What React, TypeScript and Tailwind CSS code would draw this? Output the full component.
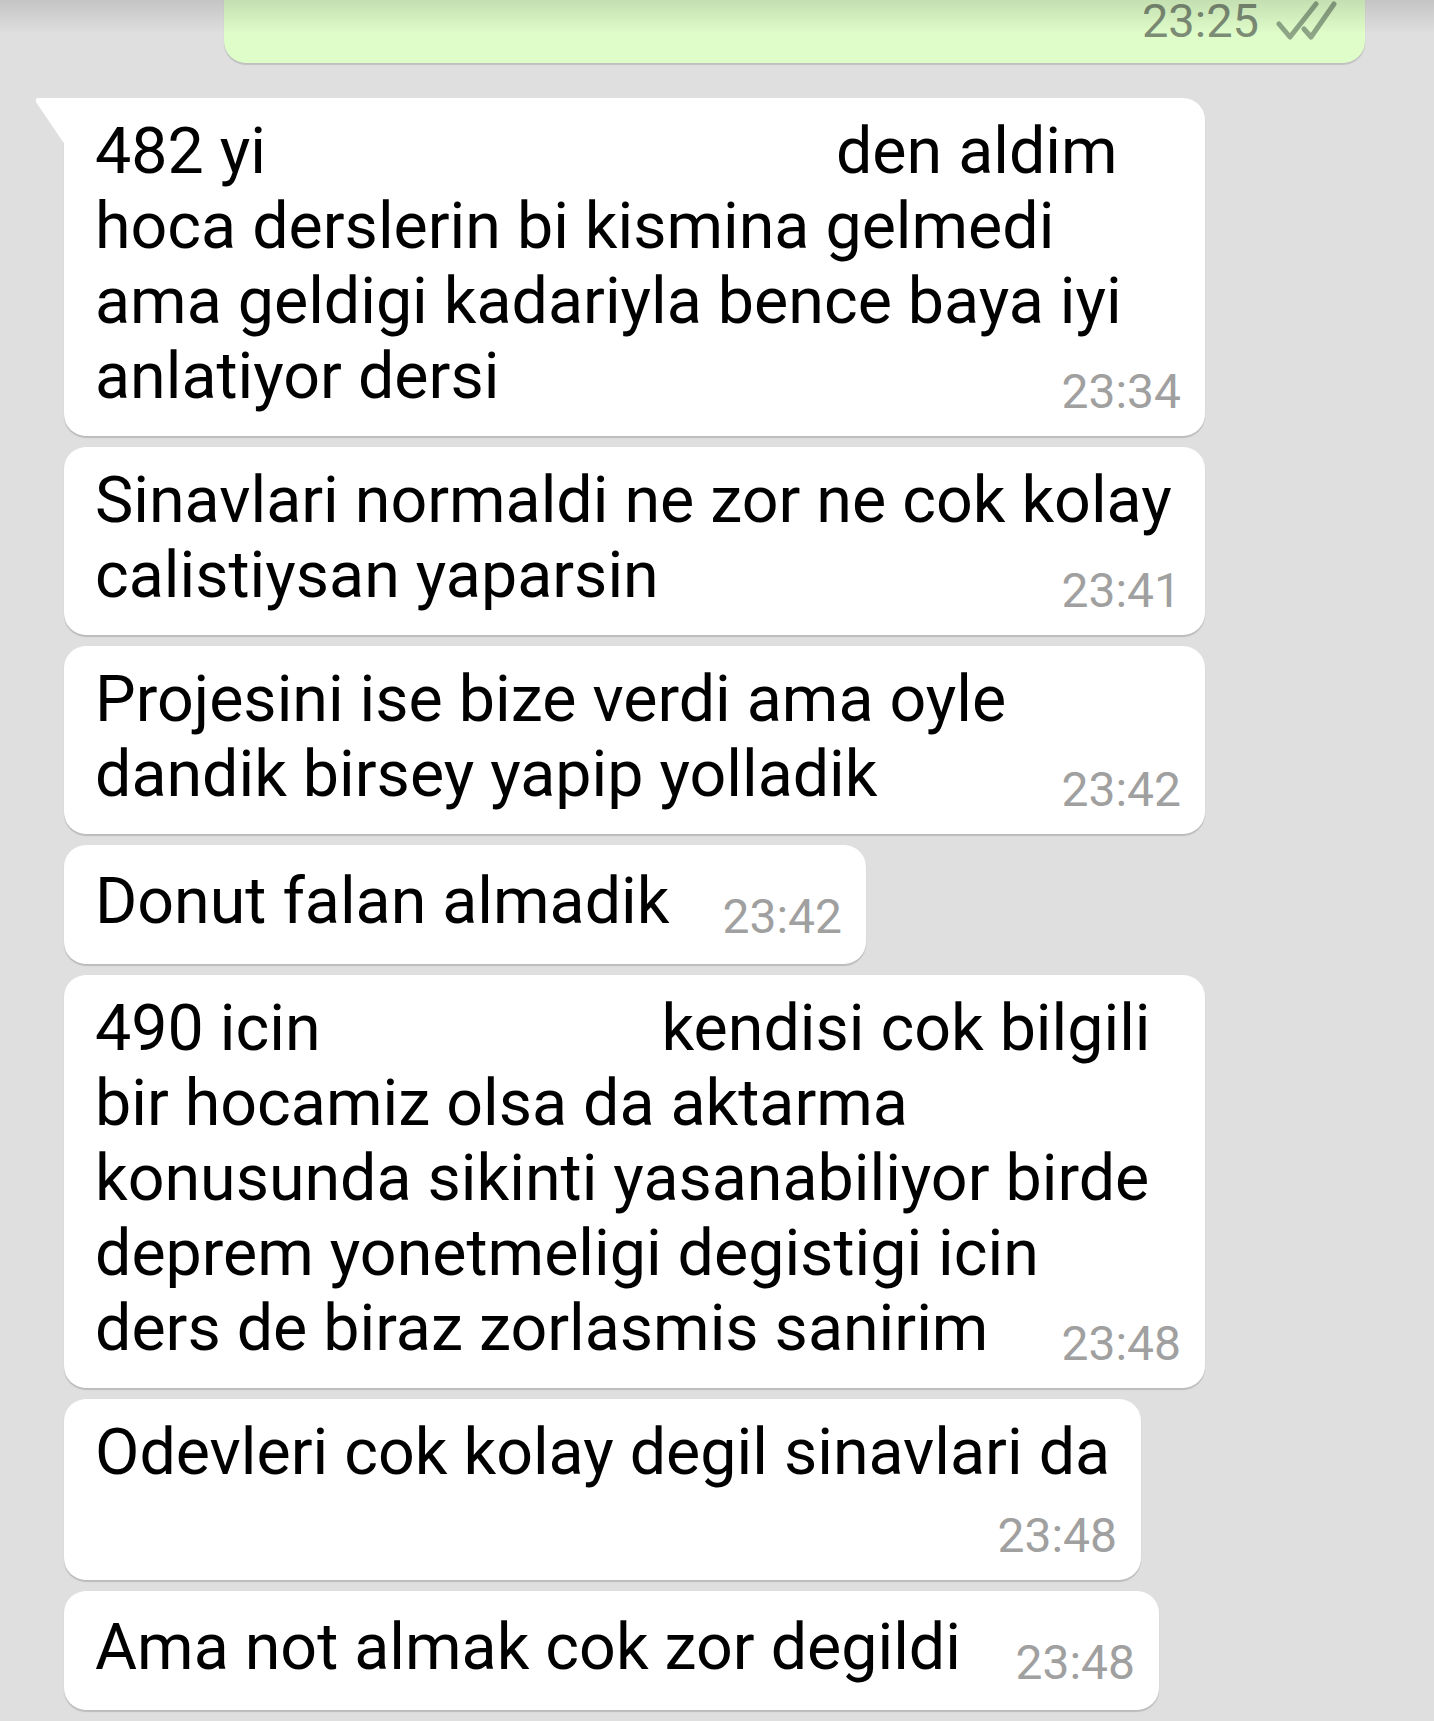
import React from 'react';

type Message = {
  lines: React.ReactNode[];
  time: string;
  width: string;
  single?: boolean;
  wrapTime?: boolean;
  tail?: boolean;
};

const messages: Message[] = [
  {
    lines: [
      <>
        482 yi<span className="inline-block w-[570px]" />den aldim
      </>,
      'hoca derslerin bi kismina gelmedi',
      'ama geldigi kadariyla bence baya iyi',
      'anlatiyor dersi',
    ],
    time: '23:34',
    width: 'w-[1141px]',
    tail: true,
  },
  {
    lines: ['Sinavlari normaldi ne zor ne cok kolay', 'calistiysan yaparsin'],
    time: '23:41',
    width: 'w-[1141px]',
  },
  {
    lines: ['Projesini ise bize verdi ama oyle', 'dandik birsey yapip yolladik'],
    time: '23:42',
    width: 'w-[1141px]',
  },
  { lines: ['Donut falan almadik'], time: '23:42', width: 'w-[802px]', single: true },
  {
    lines: [
      <>
        490 icin<span className="inline-block w-[341px]" />kendisi cok bilgili
      </>,
      'bir hocamiz olsa da aktarma',
      'konusunda sikinti yasanabiliyor birde',
      'deprem yonetmeligi degistigi icin',
      'ders de biraz zorlasmis sanirim',
    ],
    time: '23:48',
    width: 'w-[1141px]',
  },
  {
    lines: ['Odevleri cok kolay degil sinavlari da'],
    time: '23:48',
    width: 'w-[1077px]',
    wrapTime: true,
  },
  { lines: ['Ama not almak cok zor degildi'], time: '23:48', width: 'w-[1095px]', single: true },
];

const ReadTicks = () => (
  <svg width="62" height="40" viewBox="0 0 62 40" className="ml-[16px] mt-[1px]">
    <g fill="none" stroke="#8ea586" strokeWidth="5" strokeLinecap="round" strokeLinejoin="round">
      <path d="M4 23 L15 36 L41 3" />
      <path d="M29 28 L36 36 L59 3" />
    </g>
  </svg>
);

const Bubble = ({ message }: { message: Message }) => {
  const { lines, time, width, single, wrapTime, tail } = message;
  const body = lines.slice(0, -1);
  const last = lines[lines.length - 1];

  return (
    <div
      className={`relative ${width} rounded-[22px] bg-white pl-[31px] pr-[24px] shadow-[0_2px_1px_rgba(0,0,0,0.16)] ${
        single ? 'py-[19px]' : 'py-[16px]'
      } ${tail ? 'rounded-tl-none' : ''}`}
    >
      {tail && (
        <svg width="31" height="46" viewBox="0 0 31 46" className="absolute left-[-29px] top-0">
          <path d="M3 0 L31 0 L31 46 L28 44 L1 4 Q0 0 3 0 Z" fill="#ffffff" />
        </svg>
      )}
      {body.map((line, i) => (
        <div key={i} className="whitespace-nowrap text-[64.5px] leading-[75px] text-black">
          {line}
        </div>
      ))}
      {wrapTime ? (
        <>
          <div className="whitespace-nowrap text-[64.5px] leading-[75px] text-black">{last}</div>
          <div className="mt-[18px] text-right text-[48px] leading-[56px] text-[#a0a0a0]">{time}</div>
        </>
      ) : (
        <div className="flex items-start">
          <span className="whitespace-nowrap text-[64.5px] leading-[75px] text-black">{last}</span>
          <span className="ml-auto mt-[25px] pl-[40px] text-[48px] leading-[56px] text-[#a0a0a0]">{time}</span>
        </div>
      )}
    </div>
  );
};

const App = () => (
  <div
    className="relative min-h-[1721px] w-[1434px] overflow-hidden bg-[#dfdfdf]"
    style={{ fontFamily: 'Roboto, "Noto Sans", sans-serif' }}
  >
    <div className="ml-[224px] flex h-[63px] w-[1141px] items-start justify-end rounded-b-[22px] bg-[#dffdc9] pr-[28px] shadow-[0_2px_1px_rgba(0,0,0,0.14)]">
      <span className="text-[47px] leading-[42px] text-[#7c8c75]">23:25</span>
      <ReadTicks />
    </div>

    <div className="mt-[35px] flex flex-col gap-[11px] pl-[64px]">
      {messages.map((message, i) => (
        <Bubble key={i} message={message} />
      ))}
    </div>

    <div className="pointer-events-none absolute inset-x-0 top-0 h-[34px] bg-gradient-to-b from-[rgba(0,0,0,0.12)] to-transparent" />
  </div>
);

export default App;
